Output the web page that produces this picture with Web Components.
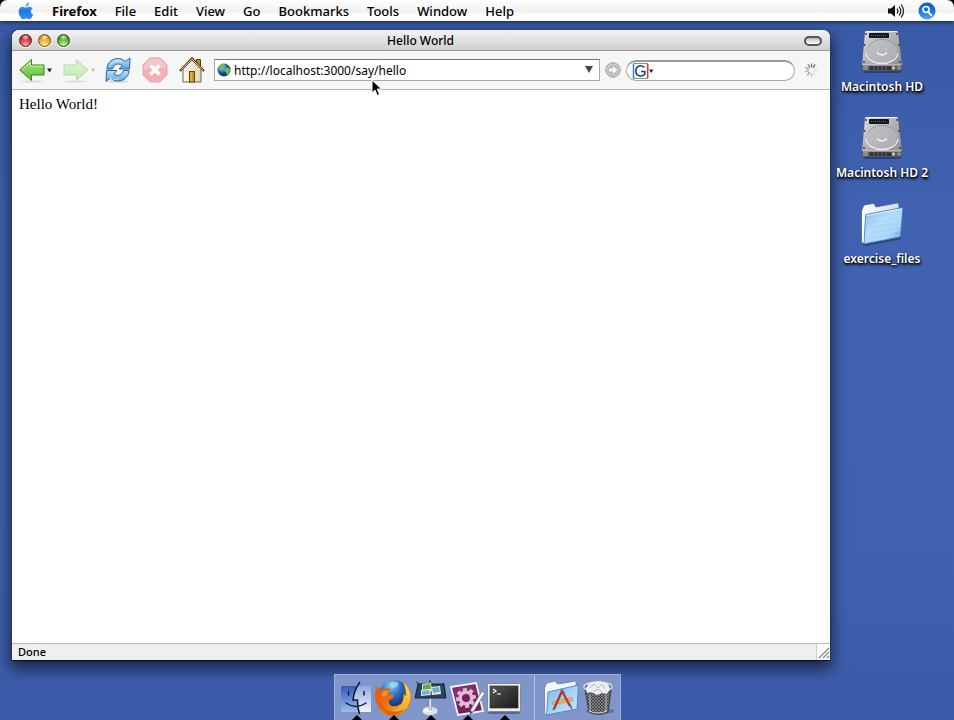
<!DOCTYPE html>
<html lang="en">
<head>
<meta charset="utf-8">
<meta name="viewport" content="width=device-width, initial-scale=1">
<title>Hello World</title>
<style>
html, body { margin: 0; height: 100%; }
body { font-family: "Noto Sans", "Open Sans", "Liberation Sans", sans-serif; color: #000; background: #3f5fae; }
</style>
</head>
<body>
<mac-desktop></mac-desktop>
<script>
const disk = `<svg viewBox="0 0 42 44" width="42" height="44"><defs>
<linearGradient id="t" x1="0" y1="0" x2="1" y2="1"><stop offset="0" stop-color="#dededf"/><stop offset=".5" stop-color="#b0b1b6"/><stop offset="1" stop-color="#8f9096"/></linearGradient></defs>
<path d="M1 40h40v2l-3 1H4z" fill="#142452" opacity=".5"/>
<path d="M4 2h34l3 33v5q0 1-1 1H2q-1 0-1-1v-5z" fill="#55575c"/>
<path d="M4 2q0-1 1-1h31q1 0 1 1l4 33H1z" fill="url(#t)"/>
<path d="M6 1.500h30" stroke="#f4f4f4"/><path d="M2 35h38" stroke="#d4d4d7"/>
<ellipse cx="21" cy="21" rx="15" ry="12.500" fill="#bcbdc1" opacity=".6"/>
<path d="M5 23c2 14 30 14 32 0" fill="none" stroke="#ececee" stroke-width="1.300"/>
<path d="M7 17c5-10 23-10 28 0" fill="none" stroke="#92949a" stroke-width=".8"/>
<rect x="8" y="3" width="20" height="5" rx=".8" fill="#17181b"/><path d="M10 5.500h16" stroke="#666" stroke-dasharray="1 1"/>
<path d="M16 22.500q5 5 10 0" fill="none" stroke="#f5f5f5" stroke-width="1.400"/><path d="M17 19v1.500M25 19v1.500" stroke="#ddd"/>
<path d="M2 36h5v4H2z" fill="#8c8d90"/><path d="M9 36.500h21v3.500H9z" fill="#323338"/><path d="M13 37v3M17 37v3M21 37v3M25 37v3" stroke="#66676b"/><rect x="31" y="36.500" width="3" height="3" fill="#d0c580"/><path d="M36 36.500h4v3h-4z" fill="#8c8d90"/>
<g fill="#34363c"><circle cx="5" cy="4" r=".9"/><circle cx="36" cy="4" r=".9"/><circle cx="3.500" cy="15" r=".9"/><circle cx="38" cy="15" r=".9"/><circle cx="3" cy="32" r=".9"/><circle cx="39" cy="32" r=".9"/></g></svg>`;

const arrow = (tone, light) => `<svg viewBox="0 0 32 26" width="32" height="26"><defs><linearGradient id="a" x1="0" y1="0" x2="0" y2="1"><stop stop-color="${light}"/><stop offset="1" stop-color="${tone}"/></linearGradient></defs>
<ellipse cx="13" cy="24.500" rx="11" ry="1" fill="#777" opacity=".2"/>`;

const ICONS = {
apple: `<svg viewBox="0 0 16 18" width="16" height="18"><defs><linearGradient id="g" x1="0" y1="0" x2="0" y2="1"><stop stop-color="#74b4f3"/><stop offset=".5" stop-color="#1d77e3"/><stop offset="1" stop-color="#3590f2"/></linearGradient></defs><path d="M11.200.3c.2 2.200-1.300 4.200-3.500 4.300C7.500 2.500 9.100.6 11.200.3zM7.900 5.600c.8 0 1.900-.9 3.500-.9 1.300 0 2.500.7 3.200 1.700-2.500 1.500-2.200 5.100.6 6.200-.7 2-2.200 4.600-3.900 4.600-1.100 0-1.600-.7-3-.7s-1.900.7-3 .7C3 17.200.6 13 .6 9.600c0-3.200 2-4.900 4.100-4.900 1.400 0 2.400.9 3.200.9z" fill="url(#g)"/></svg>`,
volume: `<svg viewBox="0 0 18 16" width="18" height="16"><path d="M1 5.500h3L8 2v12l-4-3.500H1z" fill="#111"/><path d="M10 5.500q2 2.500 0 5M12 3.500q3.600 4.500 0 9M14 1.500q5 6.500 0 13" fill="none" stroke="#222" stroke-width="1.200"/></svg>`,
spotlight: `<svg viewBox="0 0 18 18" width="18" height="18"><defs><linearGradient id="g" x1="0" y1="0" x2="0" y2="1"><stop stop-color="#0d59c8"/><stop offset=".5" stop-color="#1c70e2"/><stop offset="1" stop-color="#54aaf9"/></linearGradient></defs><circle cx="9" cy="9" r="8.500" fill="url(#g)"/><circle cx="8" cy="7.500" r="3" fill="none" stroke="#fff" stroke-width="1.700"/><path d="m10.300 10 3 3.300" stroke="#fff" stroke-width="2" stroke-linecap="round"/></svg>`,
back: arrow('#5cbf38', '#a8e874') + `<path d="M.8 13 12.500 2.500V8H25v10H12.500v5.500z" fill="url(#a)" stroke="#37811f" stroke-linejoin="round"/><path d="M3 12.800 11.500 5v4.200H24" fill="none" stroke="#dcf8bd" opacity=".8"/><path d="M28 11.500h5l-2.500 4z" fill="#222"/></svg>`,
forward: arrow('#bfe8b0', '#e0f7d3') + `<path d="M26 13 14.500 3v5H2v10h12.500v5z" fill="url(#a)" stroke="#b3d6aa" stroke-linejoin="round"/><path d="M29 11.500h4l-2 3.500z" fill="#bbb"/></svg>`,
reload: `<svg viewBox="0 0 26 26" width="26" height="26"><defs><linearGradient id="g" x1="0" y1="0" x2="0" y2="1"><stop stop-color="#bfe2fa"/><stop offset="1" stop-color="#5ea2e0"/></linearGradient></defs><ellipse cx="13" cy="24.500" rx="10" ry="1.300" fill="#777" opacity=".25"/><g fill="url(#g)" stroke="#28629f" stroke-width="1" stroke-linejoin="round"><path d="M2 12C2 3 13-2 20.500 4.500L25 1l-.5 11H14l3.300-3.500C13 5.500 9 7.500 7.500 12z"/><path d="M24 13.500c0 9-11 14-18.500 7.500L1 24.500l.5-11H12L8.700 17c4.300 3 8.300 1 9.800-3.500z"/></g><path d="M4 10Q8 2 16 4.500M4 20q4 4 10 2" fill="none" stroke="#e7f6ff" opacity=".75"/></svg>`,
stop: `<svg viewBox="0 0 26 26" width="26" height="26"><path d="M8 1h10l7 7v10l-7 7H8l-7-7V8z" fill="#f3b1b6" stroke="#e2a6aa"/><path d="M8.300 2h9.400L24 8.300v3.200Q12 8 2 13V8.300z" fill="#f7c6ca"/><path d="m8.500 8.500 9 9m0-9-9 9" stroke="#fff" stroke-width="3.600"/></svg>`,
home: `<svg viewBox="0 0 26 26" width="26" height="26"><defs><linearGradient id="g"><stop stop-color="#fdfbf0"/><stop offset="1" stop-color="#ddd5b8"/></linearGradient></defs><path d="M17.500 2.500h4V11h-4z" fill="#c08a35" stroke="#5d3b0d"/><path d="M4 12 13 3l9 9v13H4z" fill="url(#g)" stroke="#726744"/><path d="M1 14 13 1.500 25 14" fill="none" stroke="#5b4423" stroke-width="2.400"/><path d="M2 13 13 2l11 11" fill="none" stroke="#e8c587" stroke-width="1"/><rect x="10.500" y="14.500" width="5" height="10.500" fill="#e8b02a" stroke="#65400a"/><path d="M14 15v10" stroke="#b37c12"/></svg>`,
globe: `<svg viewBox="0 0 14 14" width="14" height="14"><defs><radialGradient id="g" cx=".35" cy=".3"><stop stop-color="#b5dcff"/><stop offset=".6" stop-color="#3c7ed0"/><stop offset="1" stop-color="#173b80"/></radialGradient></defs><circle cx="7" cy="7" r="6.500" fill="url(#g)"/><path d="M2 3q3-3 5-2l1 2-2 2-1 3-3-2zM8 6l3-2 2 3-1 4-2 1-1-3-2-1z" fill="#6dc04c"/></svg>`,
down: `<svg viewBox="0 0 10 8" width="10" height="8"><path d="M1 0h8L5 7z" fill="#444"/></svg>`,
go: `<svg viewBox="0 0 16 16" width="16" height="16"><circle cx="8" cy="8" r="7.200" fill="#d2d2d2" stroke="#999"/><circle cx="8" cy="8" r="5.500" fill="#bababa"/><path d="M4 6.500h4V4l4.500 4L8 12V9.500H4z" fill="#f7f7f7"/></svg>`,
throbber: `<svg viewBox="0 0 16 16" width="15" height="16"><g stroke-width="1.500" stroke-linecap="round"><path d="M8 1.500v3" stroke="#777"/><path d="m4.500 2.500 1.600 2.800" stroke="#888"/><path d="m2 5.500 2.500 1.200" stroke="#999"/><path d="m2 9.500 2.600-.8" stroke="#aaa"/><path d="m4 13 1.700-2.400" stroke="#999"/><path d="m8 14.500V12" stroke="#bbb"/><path d="m11.600 13-1.400-2.200M14 9.500l-2.500-.7M14 5.700l-2.500 1.100" stroke="#e2e2e2"/><path d="M11.500 2.500 10 5.200" stroke="#777"/></g></svg>`,
google: `<svg viewBox="0 0 24 16" width="24" height="16"><path d="M1 .500h15" stroke="#58b65b"/><path d="M1.500 1v14" stroke="#4578c7" stroke-width="1.500"/><path d="M1 15.500h15" stroke="#62b55e"/><path d="M15.700 1v14" stroke="#d33e34" stroke-width="1.600"/><path d="M12.500 4.500C8 .800 3.800 3.800 3.800 8c0 5 6 6.500 9 3.300V8.500H9" fill="none" stroke="#263c86" stroke-width="1.600"/><path d="M17 6.500h4.500L19.200 10z" fill="#222"/></svg>`,
disk,
folder: `<svg viewBox="0 0 44 44" width="44" height="44"><defs><linearGradient id="g" x1="0" y1="0" x2="1" y2="1"><stop stop-color="#86b9ea"/><stop offset=".4" stop-color="#b0dbf8"/><stop offset=".7" stop-color="#a5d3f8"/><stop offset="1" stop-color="#4b87d6"/></linearGradient><linearGradient id="h"><stop stop-color="#fff"/><stop offset="1" stop-color="#d6dbe3"/></linearGradient></defs><path d="M2 42 41 35v2L5 44z" fill="#102350" opacity=".5"/><path d="M1.500 40V9l2-5q0-1 2-1.300L13 1.500q1 0 1.500 1L16 5l21-4q2 0 2 2v32L4 42z" fill="url(#h)" stroke="#48618c" stroke-width=".8"/><path d="M4 42 5.500 14q0-1.500 1.500-1.700L43 5.500 40.500 35z" fill="url(#g)" stroke="#3e70ae" stroke-width=".8"/><path d="M6.500 13.500 42 6.800" stroke="#e2f4ff"/><g stroke="#dff3ff" opacity=".3"><path d="M6 19 41 13M6 24 41 18M5 29 41 23M5 34 40 28M5 39 40 33"/></g></svg>`,
cursor: `<svg viewBox="0 0 12 18" width="12" height="18"><path d="M1 1v13l3-3 2.200 5.500 2.300-1L6.300 10h4.200z" fill="#000" stroke="#fff" stroke-linejoin="round"/></svg>`,
finder: `<svg viewBox="0 0 34 34" width="34" height="34"><defs><linearGradient id="l" x1="0" y1="0" x2="0" y2="1"><stop stop-color="#3159b8"/><stop offset="1" stop-color="#9cbbf0"/></linearGradient><linearGradient id="r" x1="0" y1="0" x2="0" y2="1"><stop stop-color="#8fa9e0"/><stop offset="1" stop-color="#f0f5fe"/></linearGradient></defs><path d="M2 5h30v26H2z" fill="url(#r)"/><path d="M2 5h16q-3 6-4 14h4.500q-.5 7 1 12H2z" fill="url(#l)"/><path d="M21 1q-6 8-7 18h4.500q0 8 2 14" fill="none" stroke="#111a33" stroke-width="1.500"/><path d="M9.500 10.500v3.500M25 10.500v3.500M7 22q10 7 20 0" fill="none" stroke="#141d38" stroke-width="1.500" stroke-linecap="round"/></svg>`,
firefox: `<svg viewBox="0 0 38 38" width="38" height="38"><defs><radialGradient id="b" cx=".4" cy=".2" r=".8"><stop stop-color="#8ad3f3"/><stop offset=".4" stop-color="#2f72bd"/><stop offset="1" stop-color="#101d4e"/></radialGradient><linearGradient id="o" x1="0" y1="0" x2="1" y2="1"><stop stop-color="#e2540c"/><stop offset=".6" stop-color="#ee7414"/><stop offset="1" stop-color="#f8a526"/></linearGradient><linearGradient id="y" x1="0" y1="0" x2="0" y2="1"><stop stop-color="#ffe45a"/><stop offset="1" stop-color="#f39a1d"/></linearGradient></defs><circle cx="20" cy="16" r="15" fill="url(#b)"/><path d="M16 4q5-3 9 0l-2 4-5 1z" fill="#b8e6f5" opacity=".6"/>
<path d="M29 3q7 5 8 14 0 9-6 15-6 5-13 5-9-1-13-7l14-1q8-1 10-8l1-6 2 2q0-8-3-14z" fill="url(#y)" stroke="#c76a10" stroke-width=".6"/>
<path d="M3 7l4 4q5-3 10-1-3 2-3 4 1 2 6 2-1 4-5 5-1 4 3 6 5 1 8-2 0 5-6 7-9 3-15-4-5-8-2-16z" fill="url(#o)"/><path d="M3 7Q-1 17 3 25q4 8 12 11 10 1 16-6-7 4-15 2Q7 29 5 20 3 14 6 11z" fill="#e4610f"/><path d="M9 13q3-2 6-1-3 2-2 4l-4 2q-2-3 0-5z" fill="#f8a03c" opacity=".8"/></svg>`,
keynote: `<svg viewBox="0 0 34 36" width="34" height="36"><ellipse cx="17" cy="31" rx="8" ry="4.500" fill="#dce3ee" stroke="#8294b1" stroke-width=".7"/><ellipse cx="15" cy="30" rx="4" ry="2" fill="#fff"/><path d="M16 18h2.500v12H16z" fill="#e0e5ed" stroke="#7c8698" stroke-width=".6"/><path d="M5 4h26l2 14H2z" fill="#26426a" stroke="#16243a"/><path d="m3 2 3 2M17 0v4M31 3l-2 1" stroke="#222"/><path d="m9 4 9-1 1 8-10 2z" fill="#cfe0a5"/><path d="m10 5 7-1 1 5-8 1z" fill="#69a843"/><path d="m18 7 9-1 1 8-9 1z" fill="#f3ecc2"/><path d="m19 8 7-1 1 5-7 1z" fill="#6ba9cf"/><path d="m8 10 9-1 1 6-10 1z" fill="#dce9ed"/><path d="m9 11 7-1 1 4-8 1z" fill="#6bb5d4"/></svg>`,
rails: `<svg viewBox="0 0 36 36" width="36" height="36"><path d="m2 7 25-4 7 28-25 4z" fill="#74205f" stroke="#f6f2f6" stroke-width="1.800"/><path d="m4 9 21-4 2 8Q13 13 8 25z" fill="#a35b91" opacity=".35"/><g transform="translate(17 18) rotate(-8)" fill="#dfb9d5"><path d="M-2-10h4v20h-4zM-10-2h20v4h-20z"/><path d="M-2-10h4v20h-4zM-10-2h20v4h-20z" transform="rotate(45)"/><circle r="7.500"/><circle r="4" fill="#74205f"/></g><path d="m33 11 3 2-11 18-4 3 1-5z" fill="#f8f8fb" stroke="#686078" stroke-width=".8"/><path d="m21.500 31-.5 3 3-2z" fill="#333"/></svg>`,
terminal: `<svg viewBox="0 0 36 34" width="36" height="34"><defs><linearGradient id="g" x1="0" y1="0" x2="1" y2="1"><stop stop-color="#555"/><stop offset="1" stop-color="#191919"/></linearGradient></defs><path d="M2 31h32l-1 2H3z" fill="#263b70" opacity=".5"/><rect x="1.500" y="2.500" width="33" height="28" rx="1" fill="#ececec" stroke="#888"/><rect x="4" y="5" width="28" height="22" fill="url(#g)" stroke="#333" stroke-width=".7"/><path d="m7 8 3 2-3 2M11 13h4" fill="none" stroke="#fff" stroke-width="1.200"/></svg>`,
apps: `<svg viewBox="0 0 36 36" width="36" height="36"><defs><linearGradient id="g" x1="0" y1="0" x2="1" y2="1"><stop stop-color="#7cbaee"/><stop offset="1" stop-color="#c9ebff"/></linearGradient></defs><path d="M1.500 33V8l2-5 9-2 2 3L33 1l1 26-31 8z" fill="#f4f6f8" stroke="#657ba1" stroke-width=".8"/><path d="m3.500 35 1.500-23L35.500 5 34 29z" fill="url(#g)" stroke="#4779b2" stroke-width=".8"/><path d="m9 22 20-4.500 1 3L10 25z" fill="#ebb160" stroke="#b68138" stroke-width=".5"/><path d="m11 29 8-18" stroke="#b92e26" stroke-width="2.200"/><path d="m19 11 8 15" stroke="#cc3b2b" stroke-width="2.600"/><path d="m18 9 3 4M26 23l3 6M12 27l-2 3" stroke="#67595a" stroke-width="1.500"/></svg>`,
trash: `<svg viewBox="0 0 34 36" width="34" height="36"><defs><pattern id="m" width="3" height="3" patternUnits="userSpaceOnUse"><path fill="#3f4145" d="M0 0h3v3H0z"/><path d="m0 0 3 3M3 0 0 3" stroke="#a0a3a8" stroke-width=".6"/></pattern></defs><ellipse cx="19" cy="31" rx="14" ry="3" fill="#1d3161" opacity=".35"/><path d="M3.500 7h27L27 32q-10 5-19 0z" fill="url(#m)" stroke="#3c3e43"/><ellipse cx="17" cy="7" rx="14" ry="5" fill="#696c71" stroke="#e0e3e7" stroke-width="1.400"/><path d="m5 8 3-5 5-1 4-1 5 1 5 2 2 4-3 6-5-1-5 2-6-3-4 1z" fill="#eceef1"/><path d="m9 8 4-4 4 4 4-4 3 5M12 11l5-2 4 3" fill="none" stroke="#b5bac3"/><path d="M9 15v16M25 15v16" stroke="#eee" opacity=".3" stroke-width="2"/><path d="M8 31q9 4 18 0" fill="none" stroke="#d0d3d8"/></svg>`
};

const define = (name, html) => {
  const template = document.createElement('template');
  template.innerHTML = html;
  customElements.define(name, class extends HTMLElement {
    constructor() {
      super();
      this.attachShadow({ mode: 'open' }).append(template.content.cloneNode(true));
    }
    connectedCallback() {
      for (const node of this.shadowRoot.querySelectorAll('[data-label]'))
        node.setAttribute('aria-label', this.getAttribute('label') || '');
    }
  });
};

customElements.define('mac-glyph', class extends HTMLElement {
  constructor() { super(); this.attachShadow({ mode: 'open' }); }
  connectedCallback() {
    this.shadowRoot.innerHTML = '<style>:host{display:block;flex:none}svg{display:block;overflow:visible}</style>' + (ICONS[this.getAttribute('name')] || '');
    this.shadowRoot.querySelector('svg').setAttribute('aria-hidden', 'true');
  }
});

const reset = 'button{font:inherit;color:inherit;background:none;border:0;padding:0;margin:0;display:block}';

define('menu-item', `<style>:host{display:block}${reset}button{white-space:nowrap}</style><button type="button"><slot></slot></button>`);

define('menu-bar', `<style>
:host{display:block;background:linear-gradient(#fff,#fafafa 20%,#f0f0f0 55%,#fff 70%);border-radius:7px 7px 0 0;box-shadow:0 1px 4px #0009;position:relative}
nav{display:flex;align-items:center;height:21px;padding:0 18px;gap:18px;font-size:13px;line-height:20px;font-weight:500}
.status{margin-left:auto;display:flex;align-items:center;gap:13px}
.brand{font-weight:700}
${reset}</style>
<nav aria-label="Menu bar"><button type="button" aria-label="Apple menu"><mac-glyph name="apple"></mac-glyph></button>
<menu-item class="brand">Firefox</menu-item><menu-item>File</menu-item><menu-item>Edit</menu-item><menu-item>View</menu-item><menu-item>Go</menu-item><menu-item>Bookmarks</menu-item><menu-item>Tools</menu-item><menu-item>Window</menu-item><menu-item>Help</menu-item>
<div class="status"><button type="button" aria-label="Volume"><mac-glyph name="volume"></mac-glyph></button><button type="button" aria-label="Spotlight"><mac-glyph name="spotlight"></mac-glyph></button></div></nav>`);

define('title-bar', `<style>
:host{display:block;background:linear-gradient(#f4f4f4,#e2e2e2 50%,#cfcfcf);border-bottom:1px solid #999;border-radius:7px 7px 0 0}
header{display:grid;grid-template-columns:1fr auto 1fr;align-items:center;height:20px;padding:1px 8px 0 7px;box-sizing:border-box}
.lights{display:flex;gap:6px}
h1{font-size:12px;line-height:18px;font-weight:500;margin:0}
${reset}
.lights button{width:13px;height:13px;border-radius:50%;border:1px solid #5c2020;box-shadow:0 1px 1px #fff}
.lights .red{background:radial-gradient(ellipse 4px 3px at 50% 20%,#fffc,#fff0),radial-gradient(circle at 50% 90%,#ffa7a0,#d5323a 55%,#8b1b21)}
.lights .yellow{border-color:#7a501b;background:radial-gradient(ellipse 4px 3px at 50% 20%,#fffc,#fff0),radial-gradient(circle at 50% 90%,#ffef83,#f0a229 55%,#9b5a14)}
.lights .green{border-color:#254d18;background:radial-gradient(ellipse 4px 3px at 50% 20%,#fffc,#fff0),radial-gradient(circle at 50% 90%,#cbff8f,#57ad32 55%,#2a6d1b)}
.pill{justify-self:end;width:18px;height:10px;border:2px solid #555;border-radius:5px;background:linear-gradient(#bbb,#fff)}
</style><header><div class="lights"><button type="button" class="red" aria-label="Close"></button><button type="button" class="yellow" aria-label="Minimize"></button><button type="button" class="green" aria-label="Zoom"></button></div><h1><slot></slot></h1><button type="button" class="pill" aria-label="Toggle toolbar"></button></header>`);

define('tool-button', `<style>:host{display:block;flex:none}${reset}</style><button type="button" data-label><slot></slot></button>`);

define('address-field', `<style>
:host{display:block;flex:1;min-width:0}
form{display:flex;align-items:center;height:20px;margin:0;background:#fff;border:1px solid #aaa;border-top-color:#777;padding:0 5px 0 2px;gap:3px}
input{flex:1;min-width:0;border:0;padding:1px 0 0;margin:0;background:none;font:400 12px/18px "Noto Sans","Open Sans",sans-serif;color:#000;outline:0}
${reset}</style><form><mac-glyph name="globe"></mac-glyph><input type="text" aria-label="Address" value="http://localhost:3000/say/hello"><button type="button" aria-label="Show history"><mac-glyph name="down"></mac-glyph></button></form>`);

define('search-field', `<style>
:host{display:block;flex:0 1 169px;min-width:60px}
form{display:flex;align-items:center;height:18px;margin:0;background:#fff;border:1px solid #aaa;border-top:2px solid #999;border-radius:11px;padding:0 8px 0 5px}
input{flex:1;min-width:0;border:0;padding:0;background:none;font:400 12px/16px "Noto Sans",sans-serif;outline:0}
${reset}</style><form role="search"><button type="button" aria-label="Search engine"><mac-glyph name="google"></mac-glyph></button><input type="text" aria-label="Search"></form>`);

define('nav-toolbar', `<style>
:host{display:flex;align-items:center;justify-content:space-between;height:38px;padding:0 11px 0 7px;gap:9px;background:#f6f6f6;border-bottom:1px solid #b4b4b4}
.buttons{display:flex;align-items:center;gap:11px}
.fields{display:flex;align-items:center;flex:1;min-width:0;gap:5px}
</style><div class="buttons"><tool-button label="Back"><mac-glyph name="back"></mac-glyph></tool-button><tool-button label="Forward"><mac-glyph name="forward"></mac-glyph></tool-button><tool-button label="Reload"><mac-glyph name="reload"></mac-glyph></tool-button><tool-button label="Stop"><mac-glyph name="stop"></mac-glyph></tool-button><tool-button label="Home"><mac-glyph name="home"></mac-glyph></tool-button></div>
<div class="fields"><address-field></address-field><tool-button label="Go"><mac-glyph name="go"></mac-glyph></tool-button><search-field></search-field></div><mac-glyph name="throbber"></mac-glyph>`);

define('status-bar', `<style>
:host{display:flex;justify-content:space-between;align-items:stretch;background:#efefef;border-top:1px solid #bbb;font-size:11px;line-height:16px;font-weight:500;padding-left:6px}
.grip{width:13px;border-left:1px solid #ccc;background:#fafafa}
svg{display:block}</style><span><slot></slot></span><div class="grip"><svg viewBox="0 0 13 16" width="13" height="16" aria-hidden="true"><path d="m2 14 10-10M6 14l6-6M10 14l2-2" stroke="#888" stroke-width="1.200"/></svg></div>`);

define('browser-window', `<style>
:host{display:flex;flex-direction:column;min-width:0;border-radius:7px 7px 0 0;background:#fff;box-shadow:0 0 1px #000c,0 1px 1px #000a,0 7px 15px 2px #0009}
main{flex:1;padding:5px 7px;font:15px/18px "Liberation Serif",serif;color:#000}
p{margin:0}</style><title-bar>Hello World</title-bar><nav-toolbar></nav-toolbar><main><p>Hello World!</p></main><status-bar>Done</status-bar>`);

define('desktop-icon', `<style>
:host{display:block}${reset}
button{display:flex;flex-direction:column;align-items:center;gap:4px;width:100%;font-size:12px;line-height:18px;font-weight:600;color:#fff;text-shadow:0 1px 2px #000,1px 2px 3px #000;white-space:nowrap}
</style><button type="button"><slot name="icon"></slot><span><slot></slot></span></button>`);

define('dock-item', `<style>
:host{display:block;width:37px}${reset}
button{display:flex;align-items:center;justify-content:center;width:37px;height:45px;position:relative}
:host([running]) button::after{content:"";position:absolute;bottom:0;left:14px;border:5px solid #0000;border-top:0;border-bottom:5px solid #000}
</style><button type="button" data-label><slot></slot></button>`);

define('mac-dock', `<style>
:host{display:flex;justify-content:center}
nav{display:flex;background:#8096cb;border:1px solid #9daedb;border-bottom:0;padding:0 3px}
hr{width:1px;margin:0 7px 0 11px;border:0;border-left:1px solid #b4c1e4}
</style><nav aria-label="Dock">
<dock-item running label="Finder"><mac-glyph name="finder"></mac-glyph></dock-item><dock-item running label="Firefox"><mac-glyph name="firefox"></mac-glyph></dock-item><dock-item running label="Keynote"><mac-glyph name="keynote"></mac-glyph></dock-item><dock-item running label="Editor"><mac-glyph name="rails"></mac-glyph></dock-item><dock-item running label="Terminal"><mac-glyph name="terminal"></mac-glyph></dock-item><hr><dock-item label="Applications"><mac-glyph name="apps"></mac-glyph></dock-item><dock-item label="Trash"><mac-glyph name="trash"></mac-glyph></dock-item></nav>`);

define('mac-desktop', `<style>
:host{display:flex;flex-direction:column;min-height:100vh;position:relative;overflow:hidden;background:linear-gradient(90deg,#000 8px,#0000 8px) 0 0/8px 7px no-repeat,linear-gradient(#000,#000) 100% 0/8px 7px no-repeat,linear-gradient(#3859a5,#4162b1 30%,#4061b0 80%,#3b5aa8)}
.space{flex:1;display:grid;grid-template-columns:minmax(0,1fr) 104px;padding:9px 20px 14px 12px}
aside{display:flex;flex-direction:column;gap:20px}
.pointer{position:absolute;left:371px;top:79px;pointer-events:none}
</style><menu-bar></menu-bar><div class="space"><browser-window></browser-window><aside aria-label="Desktop">
<desktop-icon><mac-glyph slot="icon" name="disk"></mac-glyph>Macintosh HD</desktop-icon><desktop-icon><mac-glyph slot="icon" name="disk"></mac-glyph>Macintosh HD 2</desktop-icon><desktop-icon><mac-glyph slot="icon" name="folder"></mac-glyph>exercise_files</desktop-icon></aside></div><mac-dock></mac-dock><mac-glyph class="pointer" name="cursor"></mac-glyph>`);
</script>
</body>
</html>
